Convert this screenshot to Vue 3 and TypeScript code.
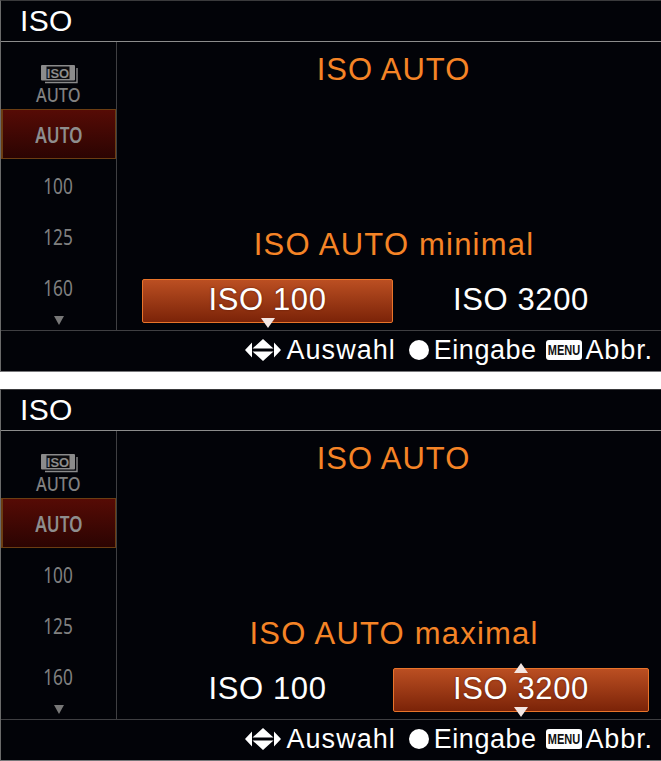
<script setup lang="ts">
const isoSteps = ['100', '125', '160']

// both camera screens only differ in the subtitle and which value is selected
const screens = [
  { subtitle: 'ISO AUTO minimal', selected: 0 },
  { subtitle: 'ISO AUTO maximal', selected: 1 },
]
const values = ['ISO 100', 'ISO 3200']
</script>

<template>
  <main class="page">
    <section v-for="(screen, s) in screens" :key="s" class="screen">
      <header class="title-bar">ISO</header>

      <div class="body">
        <aside class="sidebar">
          <div class="mode">
            <svg class="iso-icon" width="38" height="19" viewBox="0 0 38 19">
              <path d="M36 3 V17.5 H4" fill="none" stroke="#8b8b8b" stroke-width="1.4" />
              <rect x="0" y="0" width="34" height="15.5" rx="1" fill="#8b8b8b" />
              <rect x="5.5" y="1.5" width="23" height="12.5" fill="#0b0b0e" />
              <text x="17" y="12.8" text-anchor="middle" class="iso-icon-text">ISO</text>
            </svg>
            <span class="mode-label">AUTO</span>
          </div>
          <div class="step step-active"><span class="narrow">AUTO</span></div>
          <div v-for="step in isoSteps" :key="step" class="step"><span class="narrow">{{ step }}</span></div>
          <div class="more"></div>
        </aside>

        <div class="content">
          <h2 class="heading">ISO AUTO</h2>
          <h3 class="subtitle">{{ screen.subtitle }}</h3>
          <div class="values">
            <div
              v-for="(value, i) in values"
              :key="value"
              class="value"
              :class="{ 'value-active': i === screen.selected }"
            >
              {{ value }}
              <template v-if="i === screen.selected">
                <span v-if="i === 1" class="arrow arrow-up"></span>
                <span class="arrow arrow-down"></span>
              </template>
            </div>
          </div>
        </div>
      </div>

      <footer class="hints">
        <svg class="dpad" width="36" height="22" viewBox="0 0 36 22">
          <path d="M0 11 L7 3.5 V18.5 Z M36 11 L29 3.5 V18.5 Z" fill="#fff" />
          <path d="M18 0 L28.5 9.5 H7.5 Z M18 22 L28.5 12.5 H7.5 Z" fill="#fff" />
        </svg>
        <span class="hint hint-select">Auswahl</span>
        <span class="dot"></span>
        <span class="hint hint-enter">Eingabe</span>
        <svg class="menu-key" width="36" height="20" viewBox="0 0 36 20">
          <rect width="36" height="20" rx="3" fill="#fff" />
          <text transform="translate(18 15) scale(1 1.35)" text-anchor="middle" class="menu-key-text">MENU</text>
        </svg>
        <span class="hint">Abbr.</span>
      </footer>
    </section>
  </main>
</template>

<style>
html,
body {
  margin: 0;
  background: #ffffff;
}
</style>

<style scoped>
.page {
  width: 661px;
  height: 761px;
  display: flex;
  flex-direction: column;
  gap: 17px;
  font-family: "Liberation Sans", Arial, sans-serif;
  color: #ffffff;
  overflow: hidden;
}

.screen {
  height: 372px;
  flex-shrink: 0;
  display: flex;
  flex-direction: column;
  box-sizing: border-box;
  background: #020308;
  border-left: 1px solid #6a6a6a;
  border-top: 1px solid #3a3a3c;
  border-bottom: 1px solid #77777a;
}

.title-bar {
  height: 41px;
  box-sizing: border-box;
  padding-left: 19px;
  font-size: 30px;
  letter-spacing: 0.3px;
  line-height: 40px;
  border-bottom: 1px solid #8c8c8c;
  flex-shrink: 0;
}

.body {
  height: 288px;
  display: flex;
  flex-shrink: 0;
}

/* SIDEBAR */
.sidebar {
  width: 116px;
  box-sizing: border-box;
  border-right: 1px solid #3f3f42;
  display: flex;
  flex-direction: column;
  align-items: stretch;
  font-family: "Noto Sans", "Liberation Sans", sans-serif;
  color: #808080;
}

.mode {
  height: 67px;
  box-sizing: border-box;
  padding-top: 23px;
  display: flex;
  flex-direction: column;
  align-items: center;
}

.iso-icon {
  margin-left: 2px;
}

.iso-icon-text {
  font-family: "Liberation Sans", sans-serif;
  font-size: 13px;
  font-weight: 700;
  fill: #8b8b8b;
}

.mode-label {
  font-size: 20px;
  line-height: 20px;
  margin-top: 1px;
  font-weight: 500;
  transform: scaleX(0.82);
}

.step {
  height: 51px;
  display: flex;
  align-items: center;
  justify-content: center;
  font-size: 21px;
}

.narrow {
  transform: scaleX(0.82);
}

.step-active {
  height: 50px;
  margin-bottom: 1px;
  padding-top: 1px;
  box-sizing: border-box;
  color: #8e8e8e;
  font-weight: 600;
  background: linear-gradient(#560b05, #2b0402);
  border: 1px solid #6b3d12;
  border-left-width: 2px;
}

.more {
  align-self: center;
  margin-top: 3px;
  width: 0;
  height: 0;
  border-left: 5.5px solid transparent;
  border-right: 5.5px solid transparent;
  border-top: 9px solid #777777;
}

/* MAIN AREA */
.content {
  flex: 1;
  display: flex;
  flex-direction: column;
  align-items: center;
  padding-left: 25px;
  padding-right: 12px;
}

.heading,
.subtitle {
  margin: 0;
  font-size: 31px;
  font-weight: 400;
  color: #f58426;
  line-height: 36px;
  white-space: nowrap;
}

.heading {
  margin-top: 10px;
  margin-left: -4px;
  letter-spacing: 0.95px;
}

.subtitle {
  margin-top: 139px;
  margin-left: -3px;
  letter-spacing: 1.2px;
}

.values {
  align-self: stretch;
  margin-top: 16px;
  display: grid;
  grid-template-columns: 251px 256px;
  gap: 0;
}

.value {
  position: relative;
  height: 44px;
  box-sizing: border-box;
  padding-bottom: 2px;
  display: flex;
  align-items: center;
  justify-content: center;
  font-size: 31px;
  letter-spacing: 0.6px;
}

.value-active {
  background: linear-gradient(#bb4f22, #7b2308);
  border: 1px solid #e9742a;
  border-radius: 2px;
  text-shadow: 0 0 2px #5a1a06;
}

.arrow {
  position: absolute;
  left: 50%;
  margin-left: -7px;
  width: 0;
  height: 0;
  border-left: 7px solid transparent;
  border-right: 7px solid transparent;
}

.arrow-up {
  top: -6px;
  border-bottom: 10px solid #f4e6e2;
}

.arrow-down {
  bottom: -6px;
  border-top: 10px solid #f4e6e2;
}

/* FOOTER */
.hints {
  flex: 1;
  box-sizing: border-box;
  border-top: 1px solid #3f3f42;
  display: flex;
  align-items: center;
  justify-content: flex-end;
  padding-right: 8px;
  padding-bottom: 2px;
  font-size: 27px;
  letter-spacing: 0.9px;
}

.dpad {
  margin-right: 5px;
}

.hint {
  line-height: 32px;
}

.hint-select {
  letter-spacing: 1.05px;
  margin-right: 13px;
}

.dot {
  width: 20px;
  height: 20px;
  border-radius: 50%;
  background: #ffffff;
  margin-right: 5px;
}

.hint-enter {
  letter-spacing: 0.5px;
  margin-right: 10px;
}

.menu-key {
  margin-right: 3px;
}

.menu-key-text {
  font-size: 11px;
  font-weight: 700;
  fill: #111111;
  letter-spacing: 0;
}
</style>
